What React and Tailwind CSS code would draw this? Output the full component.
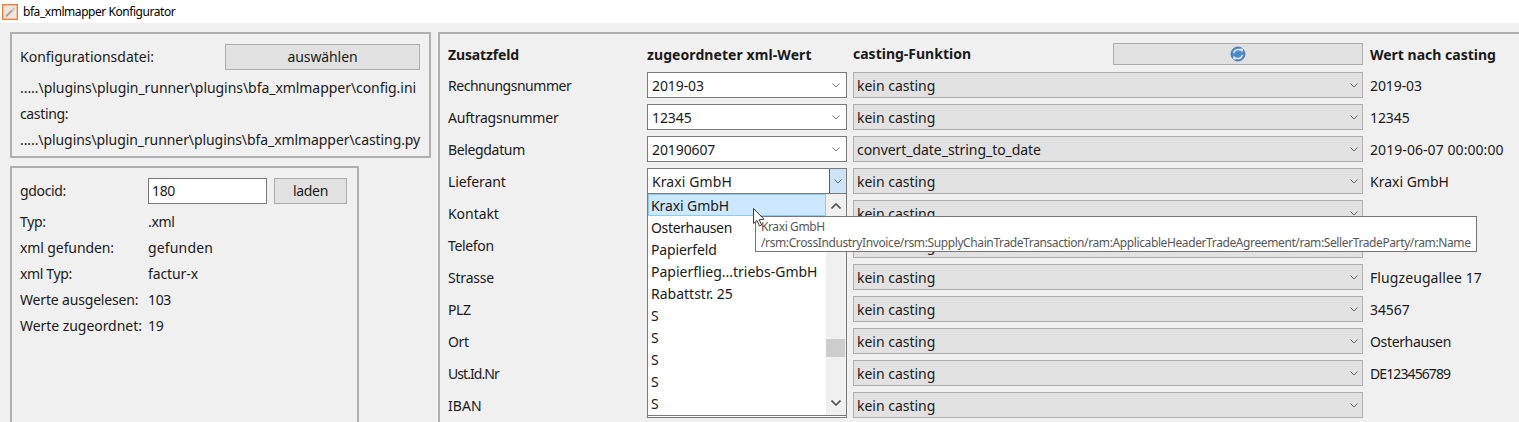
const FONT = "font-['Noto_Sans','Open_Sans',sans-serif]";

function Chev({ className = "text-[#606060]" }) {
  return (
    <svg width="8" height="5" viewBox="0 0 8 5" className={className} fill="none" stroke="currentColor" strokeWidth="0.9">
      <path d="M0.5 0.5 L4 4 L7.5 0.5" />
    </svg>
  );
}

function Combo({ value, active, white, track = "" }) {
  return (
    <div className={`flex h-[26px] items-center border ${white ? "bg-white border-[#7a7a7a] pl-[4px]" : "bg-[#e1e1e1] border-[#adadad] pl-[3px]"}`}>
      <span className={`flex-1 truncate pt-[2px] ${track}`}>{value}</span>
      {active ? (
        <span className="flex h-full w-[17px] items-center justify-center border-l border-[#0078d7] bg-[#cce4f7]"><Chev /></span>
      ) : (
        <span className={`flex h-full items-center justify-center ${white ? "w-[21px]" : "w-[17px]"}`}><Chev /></span>
      )}
    </div>
  );
}

const rows = [
  ["Rechnungsnummer", "tracking-[-0.48px]", "2019-03", "kein casting", "tracking-[-0.02px]", "2019-03", "tracking-[-0.1px]"],
  ["Auftragsnummer", "tracking-[-0.2px]", "12345", "kein casting", "tracking-[-0.02px]", "12345", "tracking-[-0.1px]"],
  ["Belegdatum", "tracking-[-0.35px]", "20190607", "convert_date_string_to_date", "tracking-[-0.05px]", "2019-06-07 00:00:00", "tracking-[0.07px]"],
  ["Lieferant", "tracking-[-0.1px]", "Kraxi GmbH", "kein casting", "tracking-[-0.02px]", "Kraxi GmbH", "tracking-[0px]"],
  ["Kontakt", "tracking-[-0.05px]", "", "kein casting", "tracking-[-0.02px]", "", ""],
  ["Telefon", "tracking-[-0.35px]", "", "kein casting", "tracking-[-0.02px]", "", ""],
  ["Strasse", "tracking-[-0.2px]", "", "kein casting", "tracking-[-0.02px]", "Flugzeugallee 17", "tracking-[0.09px]"],
  ["PLZ", "tracking-[-0.35px]", "", "kein casting", "tracking-[-0.02px]", "34567", "tracking-[-0.1px]"],
  ["Ort", "tracking-[-0.35px]", "", "kein casting", "tracking-[-0.02px]", "Osterhausen", "tracking-[-0.35px]"],
  ["Ust.Id.Nr", "tracking-[-0.95px]", "", "kein casting", "tracking-[-0.02px]", "DE123456789", "tracking-[-0.9px]"],
  ["IBAN", "tracking-[0.1px]", "", "kein casting", "tracking-[-0.02px]", "", ""],
];

const info = [
  ["Typ:", "tracking-[-0.35px]", ".xml", "tracking-[-0.35px]"],
  ["xml gefunden:", "tracking-[-0.1px]", "gefunden", "tracking-[0.15px]"],
  ["xml Typ:", "tracking-[-0.35px]", "factur-x", "tracking-[-0.1px]"],
  ["Werte ausgelesen:", "tracking-[-0.17px]", "103", "tracking-[-0.35px]"],
  ["Werte zugeordnet:", "tracking-[-0.05px]", "19", "tracking-[-0.35px]"],
];

const items = [
  ["Osterhausen", "tracking-[-0.35px]"],
  ["Papierfeld", "tracking-[-0.15px]"],
  ["Papierflieg...triebs-GmbH", "tracking-[0px]"],
  ["Rabattstr. 25", "tracking-[0px]"],
  ["S", ""],
  ["S", ""],
  ["S", ""],
  ["S", ""],
  ["S", ""],
];

export default function App() {
  return (
    <div className={`relative h-[422px] w-[1519px] overflow-hidden bg-[#f0f0f0] text-[14px] leading-[20px] text-[#1a1a1a] tracking-[-0.35px] ${FONT}`}>
      {/* title bar */}
      <div className="flex h-[23px] items-center gap-[5px] bg-white pl-[2px] text-[12px] tracking-[-0.45px] text-black">
        <svg width="16" height="16" viewBox="0 0 16 16">
          <rect x="0.7" y="0.7" width="14.6" height="14.6" fill="#f3e6dc" stroke="#e8813c" strokeWidth="1.4" />
          <path d="M4 12.5 L10 6.5" stroke="#a9a39d" strokeWidth="2" />
          <path d="M9.5 6.5 L11.5 3 L12.8 4.2 L11.8 7 Z" fill="#c9c4be" />
        </svg>
        <span>bfa_xmlmapper Konfigurator</span>
      </div>

      <div className="flex gap-[7px] pl-[10px] pt-[9px]">
        {/* left column */}
        <div className="flex w-[421px] flex-col gap-[8px]">
          <div className="h-[126px] border-2 border-[#b0b0b0] pl-[8px] pr-[8px] pt-[10px]">
            <div className="flex h-[26px] items-center">
              <span className="w-[205px] tracking-[0px]">Konfigurationsdatei:</span>
              <button className="h-[26px] w-[195px] border border-[#adadad] bg-[#e1e1e1] text-center tracking-[-0.1px]">auswählen</button>
            </div>
            <div className="mt-[5px] flex h-[26px] items-center whitespace-nowrap tracking-[-0.05px]">.....\plugins\plugin_runner\plugins\bfa_xmlmapper\config.ini</div>
            <div className="flex h-[26px] items-center">casting:</div>
            <div className="flex h-[26px] items-center whitespace-nowrap tracking-[-0.08px]">.....\plugins\plugin_runner\plugins\bfa_xmlmapper\casting.py</div>
          </div>

          <div className="h-[300px] w-[349px] border-2 border-[#b0b0b0] pl-[8px] pt-[10px]">
            <div className="flex h-[26px] items-center">
              <span className="w-[128px]">gdocid:</span>
              <span className="flex h-[26px] w-[119px] items-center border border-[#7a7a7a] bg-white pl-[3px]">180</span>
              <button className="ml-[7px] h-[26px] w-[73px] border border-[#adadad] bg-[#e1e1e1]">laden</button>
            </div>
            <div className="mt-[5px] flex flex-col">
              {info.map(([k, kt, v, vt]) => (
                <div key={k} className="flex h-[26px] items-center">
                  <span className={`w-[128px] shrink-0 whitespace-nowrap ${kt}`}>{k}</span>
                  <span className={vt}>{v}</span>
                </div>
              ))}
            </div>
          </div>
        </div>

        {/* right panel */}
        <div className="h-[400px] flex-1 border-l-2 border-t-2 border-[#b0b0b0] pl-[8px] pt-[9px]">
          <div className="grid grid-cols-[193px_200px_510px_auto] items-center gap-x-[6px] gap-y-[6px]">
            <span className="font-bold tracking-[-0.15px]">Zusatzfeld</span>
            <span className="whitespace-nowrap font-bold tracking-[0.08px]">zugeordneter xml-Wert</span>
            <div className="mb-[1px] flex h-[22px] items-center">
              <span className="font-bold tracking-[0px]">casting-Funktion</span>
              <button className="ml-auto flex h-[22px] w-[250px] items-center justify-center border border-[#adadad] bg-[#e1e1e1]">
                <svg width="16" height="16" viewBox="0 0 16 16">
                  <circle cx="8" cy="8" r="7" fill="#4f8bc9" stroke="#3a6fa8" strokeWidth="0.8" />
                  <path d="M3.6 7 A4.5 4.5 0 0 1 10.8 4.5" fill="none" stroke="#dfeaf6" strokeWidth="1.5" />
                  <path d="M12.4 9 A4.5 4.5 0 0 1 5.2 11.5" fill="none" stroke="#dfeaf6" strokeWidth="1.5" />
                  <path d="M9.5 2.4 L13.2 2.8 L12.2 6.6 Z" fill="#dfeaf6" />
                  <path d="M6.5 13.6 L2.8 13.2 L3.8 9.4 Z" fill="#dfeaf6" />
                </svg>
              </button>
            </div>
            <span className="whitespace-nowrap pl-[1px] font-bold tracking-[0px]">Wert nach casting</span>
            {rows.map(([label, lt, xml, cast, ct, val, vt], i) => (
              <div key={label} className="contents">
                <span className={`pt-[2px] ${lt}`}>{label}</span>
                <Combo value={xml} white active={i === 3} track={i === 3 ? "tracking-[0.1px]" : "tracking-[-0.1px]"} />
                <Combo value={cast} track={ct} />
                <span className={`whitespace-nowrap pl-[1px] pt-[2px] ${vt}`}>{val}</span>
              </div>
            ))}
          </div>
        </div>
      </div>

      {/* open dropdown list */}
      <div className="absolute left-[647px] top-[194px] flex h-[222px] w-[200px] border-x border-b border-[#7a7a7a] bg-white">
        <div className="w-[178px] flex-1">
          <div className="flex h-[22px] items-center border border-[#90c8f6] bg-[#cce8ff] pl-[2px] pt-[2px] tracking-[-0.1px]">Kraxi GmbH</div>
          {items.map(([t, tr], i) => (
            <div key={i} className={`flex h-[22px] items-center pl-[3px] pt-[2px] ${tr}`}>{t}</div>
          ))}
        </div>
        <div className="relative w-[20px] bg-[#f0f0f0]">
          <svg width="10" height="6" viewBox="0 0 10 6" className="absolute left-[5px] top-[9px]" fill="none" stroke="#505050" strokeWidth="1.6">
            <path d="M0.5 5.5 L5 1 L9.5 5.5" />
          </svg>
          <div className="absolute left-0 top-[145px] h-[18px] w-[19px] bg-[#cdcdcd]" />
          <svg width="10" height="6" viewBox="0 0 10 6" className="absolute bottom-[9px] left-[5px]" fill="none" stroke="#505050" strokeWidth="1.6">
            <path d="M0.5 0.5 L5 5 L9.5 0.5" />
          </svg>
        </div>
      </div>

      {/* tooltip */}
      <div className="absolute left-[755px] top-[216px] h-[36px] w-[722px] whitespace-nowrap border border-[#767676] bg-white pl-[5px] text-[12px] leading-[16px] tracking-[-0.39px] text-[#575757]">
        <div className="mt-[2px]">Kraxi GmbH</div>
        <div>/rsm:CrossIndustryInvoice/rsm:SupplyChainTradeTransaction/ram:ApplicableHeaderTradeAgreement/ram:SellerTradeParty/ram:Name</div>
      </div>

      {/* mouse cursor */}
      <svg width="13" height="20" viewBox="0 0 13 20" className="absolute left-[753px] top-[208px]">
        <path d="M0.5 0.5 L0.5 15.5 L4 12.5 L6.5 18 L8.7 17 L6.2 11.7 L11 11.2 Z" fill="#fff" stroke="#222" strokeWidth="0.9" />
      </svg>
    </div>
  );
}
